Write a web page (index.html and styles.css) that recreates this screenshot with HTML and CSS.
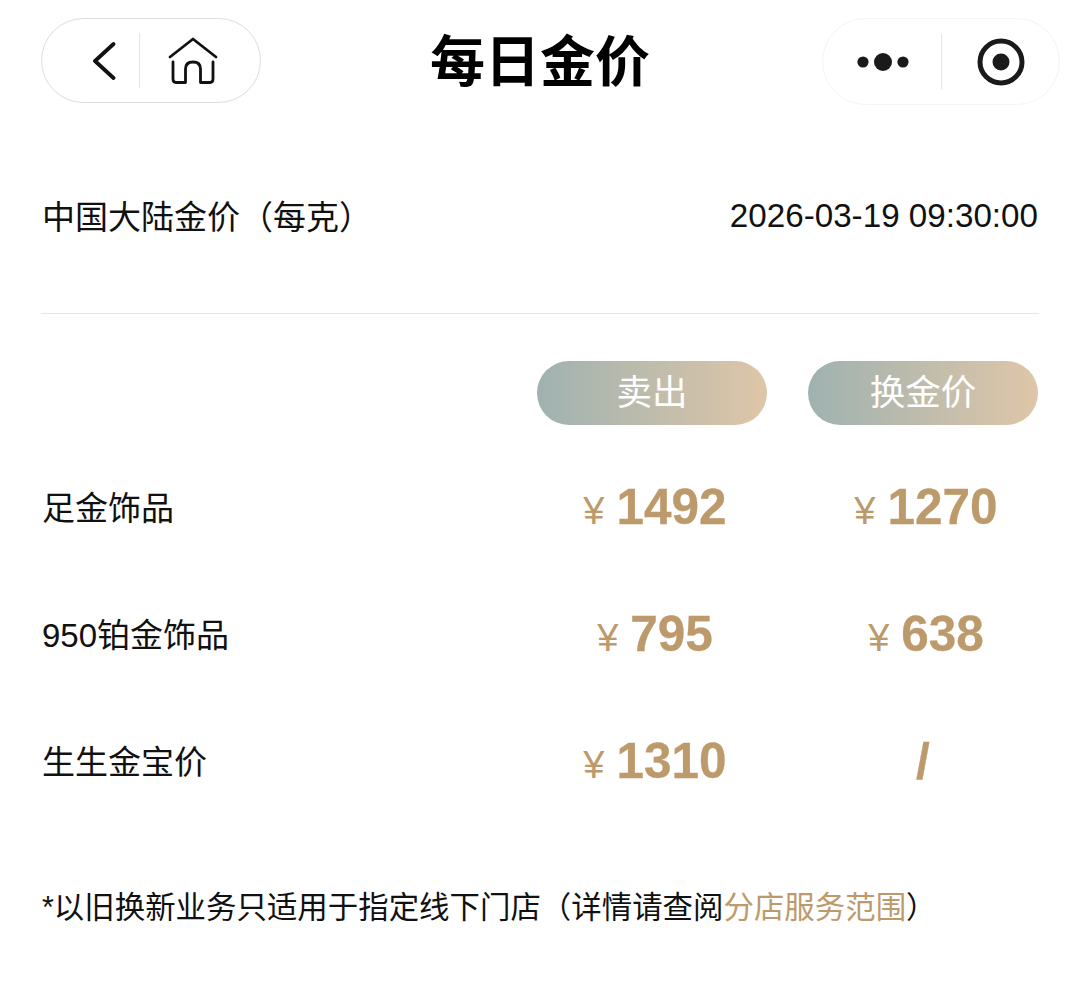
FILE: index.html
```html
<!DOCTYPE html>
<html>

<head>
    <meta charset="utf-8">
    <title>每日金价</title>
    <link rel="stylesheet" href="styles.css">
</head>

<body>

<div class="navBar">
    <div class="capsule capsuleL">
        <span class="capIcon">
            <svg width="24" height="40" viewBox="0 0 24 40">
                <path d="M21.5 3 L3 20 L21.5 37" fill="none" stroke="#111" stroke-width="3.8" stroke-linecap="round" stroke-linejoin="round"/>
            </svg>
        </span>
        <span class="capLine"></span>
        <span class="capIcon">
            <svg width="50" height="48" viewBox="0 0 50 48">
                <path d="M2 20 L25 2 L48 20" fill="none" stroke="#111" stroke-width="2.8" stroke-linecap="round" stroke-linejoin="round"/>
                <path d="M5 25 V42 Q5 45.500 8 45.500 H17.500 V32 Q17.500 25 25 25 Q32.500 25 32.500 32 V45.500 H42 Q45 45.500 45 42 V25" fill="none" stroke="#111" stroke-width="2.8" stroke-linecap="round" stroke-linejoin="round"/>
            </svg>
        </span>
    </div>
    <h1 class="navTitle">每日金价</h1>
    <div class="capsule capsuleR">
        <span class="capIcon">
            <svg width="54" height="20" viewBox="0 0 54 20">
                <circle cx="7" cy="10" r="5.6" fill="#1a1a1a"/>
                <circle cx="27" cy="10" r="9" fill="#1a1a1a"/>
                <circle cx="47" cy="10" r="5.6" fill="#1a1a1a"/>
            </svg>
        </span>
        <span class="capLine"></span>
        <span class="capIcon">
            <svg width="48" height="48" viewBox="0 0 48 48">
                <circle cx="24" cy="24" r="21" fill="none" stroke="#1a1a1a" stroke-width="5"/>
                <circle cx="24" cy="24" r="8.5" fill="#1a1a1a"/>
            </svg>
        </span>
    </div>
</div>

<div class="head">
    <span class="headName">中国大陆金价（每克）</span>
    <span class="headTime">2026-03-19 09:30:00</span>
</div>

<div class="priceBox">
    <div class="row rowTop">
        <span class="rowName"></span>
        <span class="cell"><span class="tag">卖出</span></span>
        <span class="cell"><span class="tag">换金价</span></span>
    </div>
    <div class="row">
        <span class="rowName">足金饰品</span>
        <span class="cell price"><i>¥</i><b>1492</b></span>
        <span class="cell price"><i>¥</i><b>1270</b></span>
    </div>
    <div class="row">
        <span class="rowName">950铂金饰品</span>
        <span class="cell price"><i>¥</i><b>795</b></span>
        <span class="cell price"><i>¥</i><b>638</b></span>
    </div>
    <div class="row">
        <span class="rowName">生生金宝价</span>
        <span class="cell price"><i>¥</i><b>1310</b></span>
        <span class="cell price"><b>/</b></span>
    </div>
</div>

<p class="note">*以旧换新业务只适用于指定线下门店（详情请查阅<a class="noteLink">分店服务范围</a>）</p>

</body>

</html>
```

FILE: styles.css
```css
html,
body,
h1,
p {
    margin: 0;
    padding: 0;
}

body {
    width: 1080px;
    height: 990px;
    overflow: hidden;
    background: #fff;
    color: #111;
    font-family: "Liberation Sans", "Noto Sans CJK SC", sans-serif;
}

.navBar {
    display: flex;
    justify-content: space-between;
    align-items: flex-start;
    height: 106px;
    padding: 18px 20px 0 41px;
    box-sizing: border-box;
}

.capsule {
    display: flex;
    align-items: center;
    box-sizing: border-box;
    border-radius: 44px;
}

.capsuleL {
    width: 220px;
    height: 85px;
    padding-left: 50px;
    border: 1.5px solid #dcdcdc;
}

.capsuleR {
    width: 238px;
    height: 87px;
    padding-left: 33px;
    border: 1.5px solid #f4f4f4;
}

.capIcon {
    display: flex;
}

.capLine {
    width: 1px;
    height: 55px;
    background: #e4e4e4;
}

.capsuleL .capLine {
    margin: 0 28px 0 23px;
}

.capsuleR .capLine {
    margin: 0 35px 0 31px;
}

.navTitle {
    font-size: 55px;
    line-height: 88px;
    font-weight: 700;
    color: #000;
    margin-left: -3px;
}

.head {
    display: flex;
    justify-content: space-between;
    align-items: center;
    margin: 0 41px;
    height: 208px;
    padding-top: 10px;
    box-sizing: border-box;
    border-bottom: 1px solid #e6e6e6;
    font-size: 33px;
}

.headName {
    margin-left: 1px;
}

.headTime {
    margin: 2px 1px 0 0;
    font-size: 33.200px;
}

.priceBox {
    margin: 47px 41px 0;
}

.row {
    display: flex;
    align-items: center;
    height: 127px;
}

.rowTop {
    height: 64px;
    margin-bottom: 18px;
}

.rowName {
    width: 496px;
    padding: 0 0 2px 1px;
    box-sizing: border-box;
    font-size: 33px;
}

.cell {
    width: 230px;
    display: flex;
    justify-content: center;
    align-items: baseline;
}

.cell + .cell {
    margin-left: 41px;
}

.tag {
    width: 100%;
    height: 64px;
    line-height: 64px;
    text-align: center;
    border-radius: 32px;
    color: #fff;
    font-size: 35.500px;
    background: linear-gradient(90deg, #9fb2b0, #dfc6a8);
}

.price {
    color: #bd9a6c;
}

.price i {
    font-style: normal;
    font-size: 38px;
    margin: 0 12px 0 6px;
}

.price b {
    font-size: 49.500px;
    -webkit-text-stroke: 0.3px #bd9a6c;
}

.note {
    margin: 59px 41px 0 42px;
    font-size: 30.450px;
    white-space: nowrap;
}

.noteLink {
    color: #bd9a6c;
}
```
